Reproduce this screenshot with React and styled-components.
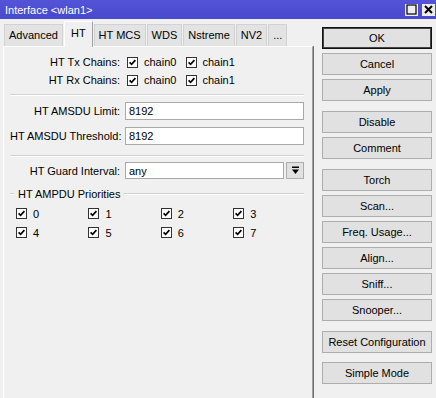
import styled, { createGlobalStyle } from 'styled-components';

const GlobalStyle = createGlobalStyle`
  html, body {
    margin: 0;
    padding: 0;
    background: #f0f0f0;
  }
  body {
    font-family: "Liberation Sans", Arial, sans-serif;
    font-size: 11px;
    color: #000;
  }
`;

const Window = styled.div`
  width: 436px;
  height: 398px;
  overflow: hidden;
  display: flex;
  flex-direction: column;
  background: #f0f0f0;
`;

const TitleBar = styled.div`
  height: 19px;
  flex: none;
  display: flex;
  align-items: center;
  padding: 0 1px 0 5px;
  background: linear-gradient(#5454d8, #4848cc);
  color: #fff;
  font-size: 11px;
`;

const TitleButtons = styled.div`
  margin-left: auto;
  display: flex;
  gap: 4px;
`;

const TitleButton = styled.div`
  width: 13px;
  height: 12px;
  background: #ececec;
  display: flex;
  align-items: center;
  justify-content: center;
`;

const Body = styled.div`
  flex: 1;
  display: flex;
  min-height: 0;
`;

const LeftColumn = styled.div`
  width: 310px;
  padding-left: 3px;
  display: flex;
  flex-direction: column;
`;

const Tabs = styled.div`
  height: 27px;
  flex: none;
  display: flex;
  align-items: flex-end;
  padding-left: 1px;
`;

const Tab = styled.div`
  height: ${(p) => (p.$active ? 25 : 21)}px;
  line-height: ${(p) => (p.$active ? 23 : 21)}px;
  padding: 0 ${(p) => (p.$active ? 6 : 4)}px;
  margin-right: 1px;
  margin-bottom: ${(p) => (p.$active ? -1 : 0)}px;
  background: ${(p) => (p.$active ? '#f0f0f0' : '#e3e3e3')};
  border: 1px solid ${(p) => (p.$active ? '#ffffff' : '#d2d2d2')};
  border-right-color: ${(p) => (p.$active ? '#a0a0a0' : '#d2d2d2')};
  border-bottom: none;
  position: relative;
  z-index: ${(p) => (p.$active ? 2 : 1)};
  white-space: nowrap;
`;

const Panel = styled.div`
  flex: 1;
  border-top: 1px solid #fff;
  border-left: 1px solid #fff;
  border-right: 1px solid #a0a0a0;
  box-shadow: 1px 0 0 #6e6e6e;
  padding: 6px 8px 0 6px;
`;

const FormRow = styled.div`
  display: grid;
  grid-template-columns: 110px 1fr;
  column-gap: 5px;
  align-items: center;
  height: ${(p) => p.$h || 18}px;
  margin-top: ${(p) => p.$mt || 0}px;
`;

const Label = styled.div`
  text-align: right;
  white-space: nowrap;
`;

const Separator = styled.div`
  height: 0;
  border-top: 1px solid #d3d3d3;
  border-bottom: 1px solid #fff;
  margin-top: ${(p) => p.$mt}px;
`;

const Checks = styled.div`
  display: flex;
  gap: 10px;
  padding-left: 2px;
`;

const CheckItem = styled.div`
  display: inline-flex;
  align-items: center;
  gap: ${(p) => p.$gap || 5}px;
`;

const Box = styled.span`
  width: 11px;
  height: 11px;
  box-sizing: border-box;
  border: 1px solid #333;
  background: #fff;
  display: inline-flex;
  align-items: center;
  justify-content: center;
`;

const Input = styled.div`
  height: ${(p) => p.$h || 18}px;
  box-sizing: border-box;
  border: 1px solid #a9a9a9;
  background: #fff;
  padding-left: 3px;
  display: flex;
  align-items: center;
  flex: 1;
`;

const SelectWrap = styled.div`
  display: flex;
  gap: 2px;
`;

const DropButton = styled.div`
  width: 18px;
  height: 17px;
  box-sizing: border-box;
  border: 1px solid #adadad;
  background: #e1e1e1;
  display: flex;
  align-items: center;
  justify-content: center;
`;

const GroupTitle = styled.div`
  display: flex;
  align-items: center;
  height: 14px;
  margin-top: 8px;
  gap: 4px;

  &::before,
  &::after {
    content: '';
    height: 0;
    border-top: 1px solid #d3d3d3;
    border-bottom: 1px solid #fff;
  }
  &::before {
    width: 4px;
  }
  &::after {
    flex: 1;
  }
`;

const PriorityGrid = styled.div`
  display: grid;
  grid-template-columns: repeat(4, 72.4px);
  grid-auto-rows: 19px;
  align-items: center;
  padding-left: 6px;
  margin-top: 3px;
`;

const RightColumn = styled.div`
  padding: 8px 0 0 9px;
  display: flex;
  flex-direction: column;
`;

const Button = styled.div`
  width: 110px;
  height: 22px;
  box-sizing: border-box;
  border: 1px solid ${(p) => (p.$default ? '#111' : '#adadad')};
  box-shadow: ${(p) => (p.$default ? 'inset 0 0 0 1px #444' : 'none')};
  background: #e1e1e1;
  display: flex;
  align-items: center;
  justify-content: center;
  margin-top: ${(p) => p.$mt || 0}px;
  white-space: nowrap;
`;

const Check = () => (
  <Box>
    <svg width="9" height="9" viewBox="0 0 9 9">
      <path d="M1.6 4.3 L3.6 6.3 L7.4 2.1" fill="none" stroke="#000" strokeWidth="1.7" />
    </svg>
  </Box>
);

const tabs = ['Advanced', 'HT', 'HT MCS', 'WDS', 'Nstreme', 'NV2', '...'];

const buttons = [
  ['OK', 0],
  ['Cancel', 4],
  ['Apply', 4],
  ['Disable', 10],
  ['Comment', 4],
  ['Torch', 10],
  ['Scan...', 4],
  ['Freq. Usage...', 4],
  ['Align...', 4],
  ['Sniff...', 4],
  ['Snooper...', 4],
  ['Reset Configuration', 10],
  ['Simple Mode', 9],
];

export default function App() {
  return (
    <>
      <GlobalStyle />
      <Window>
        <TitleBar>
          Interface &lt;wlan1&gt;
          <TitleButtons>
            <TitleButton>
              <svg width="11" height="11" viewBox="0 0 11 11">
                <rect x="1" y="1" width="9" height="9" fill="none" stroke="#000" strokeWidth="1.2" />
              </svg>
            </TitleButton>
            <TitleButton>
              <svg width="11" height="11" viewBox="0 0 11 11">
                <path d="M2 2 L9 9 M9 2 L2 9" stroke="#000" strokeWidth="2" />
              </svg>
            </TitleButton>
          </TitleButtons>
        </TitleBar>
        <Body>
          <LeftColumn>
            <Tabs>
              {tabs.map((t) => (
                <Tab key={t} $active={t === 'HT'}>
                  {t}
                </Tab>
              ))}
            </Tabs>
            <Panel>
              <FormRow>
                <Label>HT Tx Chains:</Label>
                <Checks>
                  <CheckItem $gap={6}>
                    <Check />
                    chain0
                  </CheckItem>
                  <CheckItem>
                    <Check />
                    chain1
                  </CheckItem>
                </Checks>
              </FormRow>
              <FormRow>
                <Label>HT Rx Chains:</Label>
                <Checks>
                  <CheckItem $gap={6}>
                    <Check />
                    chain0
                  </CheckItem>
                  <CheckItem>
                    <Check />
                    chain1
                  </CheckItem>
                </Checks>
              </FormRow>
              <Separator $mt={5} />
              <FormRow $mt={6}>
                <Label>HT AMSDU Limit:</Label>
                <Input>8192</Input>
              </FormRow>
              <FormRow $mt={7}>
                <Label>HT AMSDU Threshold:</Label>
                <Input>8192</Input>
              </FormRow>
              <Separator $mt={10} />
              <FormRow $mt={5} $h={17}>
                <Label>HT Guard Interval:</Label>
                <SelectWrap>
                  <Input $h={17}>any</Input>
                  <DropButton>
                    <svg width="9" height="9" viewBox="0 0 9 9">
                      <rect x="1" y="0.5" width="7" height="1.5" fill="#000" />
                      <path d="M1 3.5 H8 L4.5 8 Z" fill="#000" />
                    </svg>
                  </DropButton>
                </SelectWrap>
              </FormRow>
              <GroupTitle>HT AMPDU Priorities</GroupTitle>
              <PriorityGrid>
                {[0, 1, 2, 3, 4, 5, 6, 7].map((n) => (
                  <CheckItem key={n} $gap={6}>
                    <Check />
                    {n}
                  </CheckItem>
                ))}
              </PriorityGrid>
            </Panel>
          </LeftColumn>
          <RightColumn>
            {buttons.map(([label, mt]) => (
              <Button key={label} $mt={mt} $default={label === 'OK'}>
                {label}
              </Button>
            ))}
          </RightColumn>
        </Body>
      </Window>
    </>
  );
}
